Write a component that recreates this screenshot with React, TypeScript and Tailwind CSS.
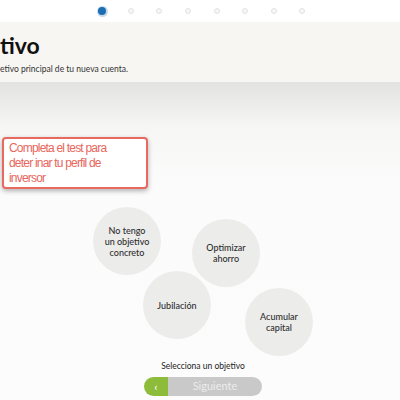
import React from "react";

const dots = [true, false, false, false, false, false, false, false];

function Bubble({ left, top, lines }: { left: number; top: number; lines: string[] }) {
  return (
    <div
      className="absolute w-[68px] h-[68px] rounded-full bg-[#ececeb] flex flex-col items-center justify-center text-[9px] leading-[11px] font-medium text-[#2e2e2e] text-center"
      style={{ left, top }}
    >
      {lines.map((l) => (
        <span key={l}>{l}</span>
      ))}
    </div>
  );
}

export default function App() {
  return (
    <div className="w-[400px] h-[400px] overflow-hidden bg-white flex flex-col" style={{ fontFamily: "Lato, 'Open Sans', sans-serif" }}>
      <div className="h-[22px] flex items-center pl-[88px] shrink-0">
        {dots.map((a, i) => (
          <div key={i} className="w-[28.6px] flex justify-center">
            {a ? (
              <div className="w-[11px] h-[11px] rounded-full bg-[#c9d9e8] flex items-center justify-center">
                <div className="w-[8px] h-[8px] rounded-full bg-[#1b6db4]" />
              </div>
            ) : (
              <div className="w-[6px] h-[6px] rounded-full bg-[#f6f6f6] border border-[#e2e2e2]" />
            )}
          </div>
        ))}
      </div>
      <div className="h-[60px] bg-[#f7f6f2] shrink-0 flex flex-col">
        <div className="mt-[9px] text-[23px] leading-[28px] font-bold text-[#111]">tivo</div>
        <div className="mt-[5px] text-[8.5px] leading-[11px] text-[#333]">etivo principal de tu nueva cuenta.</div>
      </div>
      <div className="flex-1 flex flex-col bg-[linear-gradient(to_bottom,#e2e2e0_0px,#f6f6f5_45px,#fbfbfb_100px,#fcfcfc_100%)]">
        <div
          className="mt-[55px] ml-[2px] w-[146px] h-[52px] border-2 border-[#e8695f] rounded-[4px] bg-white shadow-[0_2px_5px_rgba(0,0,0,0.3)] pl-[5px] pt-[2px] text-[12px] leading-[15px] tracking-[-0.8px] text-[#e8665c] flex flex-col whitespace-nowrap"
          style={{ fontFamily: "'Liberation Sans', Arial, sans-serif" }}
        >
          <span>Completa el test para</span>
          <span>deter inar tu perfil de</span>
          <span>inversor</span>
        </div>
        <div className="relative mt-[18px] ml-[93px] w-[220px] h-[150px]">
          <Bubble left={0} top={0} lines={["No tengo", "un objetivo", "concreto"]} />
          <Bubble left={99} top={12} lines={["Optimizar", "ahorro"]} />
          <Bubble left={50} top={64} lines={["Jubilación"]} />
          <Bubble left={152} top={81} lines={["Acumular", "capital"]} />
        </div>
        <div className="mt-[3px] text-center text-[8.5px] leading-[12px] text-[#222] pl-[6px]">Selecciona un objetivo</div>
        <div className="mt-[5px] flex justify-center pl-[6px]">
          <div className="w-[24px] h-[19px] bg-[#8dbb3a] rounded-l-full rounded-r-[4px] flex items-center justify-center text-white text-[12px]">
            ‹
          </div>
          <div className="w-[94px] h-[19px] bg-[#c9c9c9] rounded-r-full flex items-center justify-center text-[11px] text-[#ececec]">
            Siguiente
          </div>
        </div>
      </div>
    </div>
  );
}
